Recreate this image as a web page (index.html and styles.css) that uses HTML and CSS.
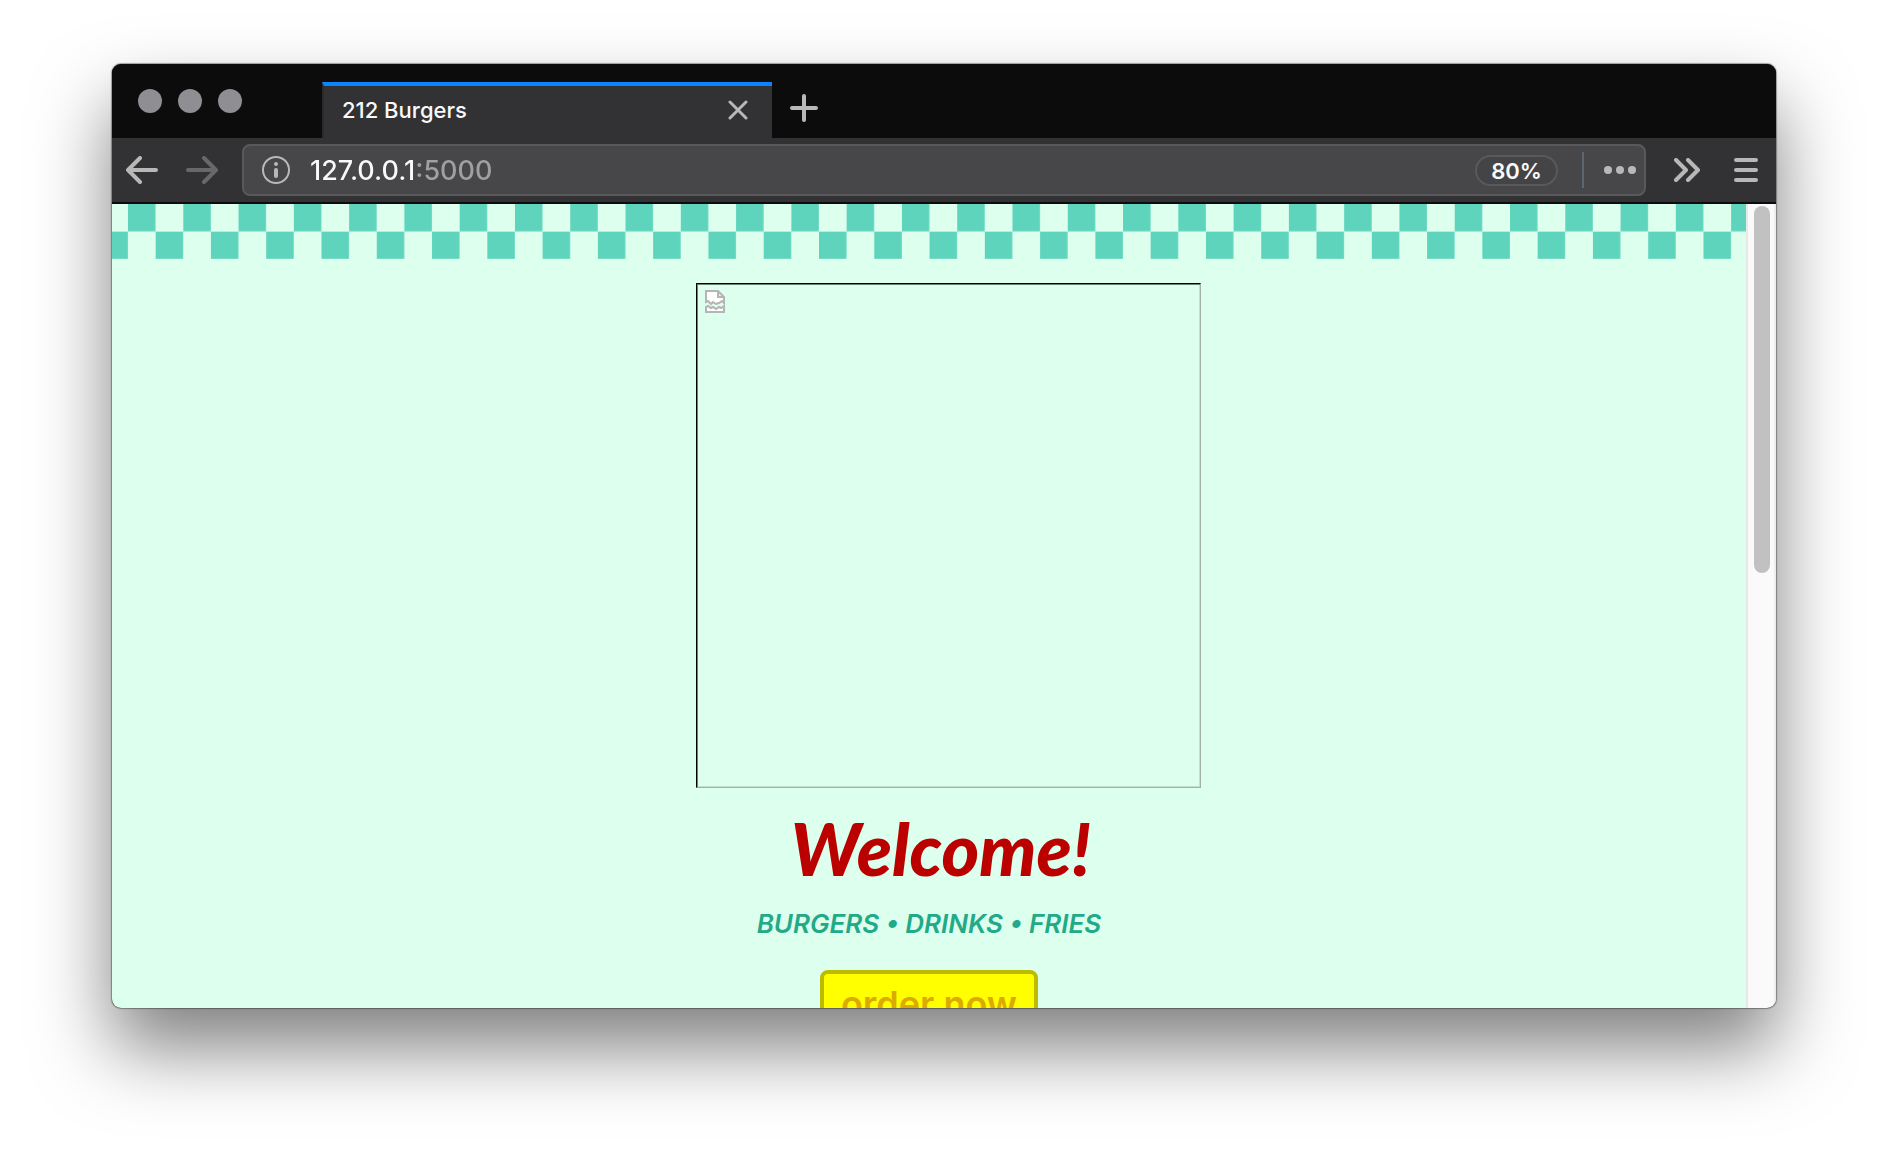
FILE: index.html
```html
<!DOCTYPE html>
<html lang="en">
<head>
<meta charset="utf-8">
<meta name="viewport" content="width=device-width, initial-scale=1">
<title>212 Burgers</title>
<link rel="stylesheet" href="styles.css">
</head>
<body>
<div class="window">
  <header class="titlebar">
    <div class="lights">
      <button class="light" aria-label="Close window"></button>
      <button class="light" aria-label="Minimize window"></button>
      <button class="light" aria-label="Zoom window"></button>
    </div>
    <div class="tab">
      <span class="tab-title">212 Burgers</span>
      <button class="icon-button" aria-label="Close tab">
        <svg width="20" height="20" viewBox="0 0 20 20"><path d="M2 2l16 16M18 2L2 18" stroke-width="3"/></svg>
      </button>
    </div>
    <button class="icon-button new-tab" aria-label="New tab">
      <svg width="28" height="28" viewBox="0 0 28 28"><path d="M14 2v24M2 14h24" stroke-width="4"/></svg>
    </button>
  </header>

  <nav class="toolbar">
    <button class="icon-button" aria-label="Back">
      <svg width="32" height="28" viewBox="0 0 32 28"><path d="M30 14H2M14 2L2 14l12 12" stroke-width="4"/></svg>
    </button>
    <button class="icon-button forward" aria-label="Forward" disabled>
      <svg width="32" height="28" viewBox="0 0 32 28"><path d="M2 14h28M18 2l12 12-12 12" stroke-width="4"/></svg>
    </button>
    <form class="urlbar">
      <button type="button" class="icon-button" aria-label="Site information">
        <svg width="28" height="28" viewBox="0 0 28 28"><circle cx="14" cy="14" r="13" stroke-width="2"/><path d="M14 14v6" stroke-width="4"/><circle class="dot" cx="14" cy="8" r="2"/></svg>
      </button>
      <input class="url" type="text" value="127.0.0.1:5000" aria-label="Address">
      <button type="button" class="zoom">80%</button>
      <span class="divider"></span>
      <button type="button" class="icon-button" aria-label="Page actions">
        <svg width="32" height="8" viewBox="0 0 32 8"><circle class="dot" cx="4" cy="4" r="4"/><circle class="dot" cx="16" cy="4" r="4"/><circle class="dot" cx="28" cy="4" r="4"/></svg>
      </button>
    </form>
    <button class="icon-button" aria-label="More tools">
      <svg width="26" height="24" viewBox="0 0 26 24"><path d="M2 2l10 10L2 22M14 2l10 10-10 10" stroke-width="4"/></svg>
    </button>
    <button class="icon-button menu" aria-label="Open menu">
      <svg width="24" height="24" viewBox="0 0 24 24"><path d="M2 2h20M2 12h20M2 22h20" stroke-width="4"/></svg>
    </button>
  </nav>

  <div class="viewport">
    <main class="page">
      <svg class="checks" aria-hidden="true">
        <defs>
          <pattern id="check" x="16" width="55.28" height="55.28" patternUnits="userSpaceOnUse">
            <path d="M0 0h27.5v27.5H0zM27.64 27.64h27.5v27.5h-27.5z"/>
          </pattern>
        </defs>
        <rect width="100%" height="55" fill="url(#check)"/>
      </svg>
      <div class="picture" role="img" aria-label="Missing picture">
        <svg width="20" height="23" viewBox="0 0 20 23"><path class="sheet" d="M1 1h12l6 6v6l-2-2-3 2-3 1-3-2-2 2-3-3-2 1zM13 1v6h6M1 22v-5l2-1 3 2 2-1 3 2 3-2 2 1 3-2v6z"/></svg>
      </div>
      <h1 class="welcome">Welcome!</h1>
      <p class="tagline">BURGERS • DRINKS • FRIES</p>
      <button class="order">order now</button>
    </main>
    <div class="scrollbar"><div class="thumb"></div></div>
  </div>
</div>
</body>
</html>
```
FILE: styles.css
```css
* { box-sizing: border-box; }

body {
  margin: 0;
  padding: 64px 112px 160px;
  background: #fff;
  font-family: Inter, "Liberation Sans", sans-serif;
}

button, input {
  margin: 0;
  padding: 0;
  border: 0;
  background: none;
  font: inherit;
}

.window {
  display: flex;
  flex-direction: column;
  height: calc(100vh - 224px);
  overflow: hidden;
  border-radius: 9px;
  background: #0c0c0d;
  box-shadow: 0 0 1px 1px rgba(0, 0, 0, .35), 0 40px 76px rgba(0, 0, 0, .5);
}

/* Title bar */
.titlebar {
  display: flex;
  align-items: flex-end;
  flex: none;
  height: 74px;
  background: #0c0c0d;
}

.lights {
  display: flex;
  gap: 16px;
  width: 210px;
  padding: 0 0 25px 26px;
}

.light {
  width: 24px;
  height: 24px;
  border-radius: 50%;
  background: #8f8e93;
}

.tab {
  display: flex;
  align-items: center;
  justify-content: space-between;
  width: 450px;
  height: 56px;
  padding: 0 24px 4px 18px;
  border-left: 2px solid #2a2a2c;
  border-top: 4px solid #0a84ff;
  background: #323234;
}

.tab-title {
  color: #f9f9fa;
  font-size: 22px;
  font-weight: 500;
  line-height: 28px;
}

.icon-button {
  display: flex;
  flex: none;
}

.icon-button svg {
  fill: none;
  stroke: #b8b8b9;
  stroke-linecap: round;
  stroke-linejoin: round;
}

.icon-button .dot {
  fill: #b8b8b9;
  stroke: none;
}

.new-tab { padding: 0 0 16px 18px; }

/* Toolbar */
.toolbar {
  display: flex;
  align-items: center;
  flex: none;
  height: 66px;
  padding: 0 18px 0 14px;
  border-bottom: 2px solid #0c0c0d;
  background: #323234;
}

.forward { margin: 0 24px 0 28px; }
.forward svg { stroke: #68686a; }

.urlbar {
  display: flex;
  align-items: center;
  flex: 1;
  height: 52px;
  margin-right: 28px;
  padding: 0 8px 0 18px;
  border: 2px solid #59595b;
  border-radius: 8px;
  background: #474749;
}

/* The host is bright and the port is dimmed. */
.url {
  flex: 1;
  min-width: 0;
  height: 40px;
  margin-left: 20px;
  background: linear-gradient(to right, #f9f9fa 105px, #a0a0a2 105px);
  background-clip: text;
  color: transparent;
  font-size: 27px;
  font-weight: 500;
}

.zoom {
  width: 83px;
  height: 31px;
  border: 2px solid #59595b;
  border-radius: 16px;
  background: #444446;
  color: #f9f9fa;
  font-size: 22px;
  font-weight: 600;
  line-height: 28px;
}

.divider {
  width: 2px;
  height: 36px;
  margin: 0 20px 0 24px;
  background: #5d6673;
}

.menu { margin-left: 34px; }

/* Web page */
.viewport {
  display: flex;
  flex: 1;
  min-height: 0;
}

.page {
  display: flex;
  flex-direction: column;
  align-items: center;
  flex: 1;
  overflow: hidden;
  background: #ddffee;
}

.page > * { flex: none; }

.checks {
  width: 100%;
  height: 55px;
  fill: #5fd4bc;
}

.picture {
  width: 505px;
  height: 505px;
  margin: 24px 0 0 39px;
  padding: 6px 8px;
  border: 1px solid;
  border-color: #000 #a5b0aa #a5b0aa #000;
  box-shadow: inset 1px 1px #6d7f76, inset -1px -1px #c5ddd2;
}

.sheet {
  fill: #fff;
  stroke: #b5b5b5;
  stroke-width: 2;
}

.welcome {
  margin: 16px 0 0;
  padding-left: 24px;
  color: #bb0000;
  font-family: Lato, "Liberation Sans", sans-serif;
  font-size: 72px;
  font-style: italic;
  font-weight: 900;
  line-height: 88px;
}

.tagline {
  margin: 14px 0 0;
  color: #22aa88;
  font-size: 26px;
  font-style: italic;
  font-weight: 600;
  line-height: 36px;
}

.order {
  width: 218px;
  margin-top: 28px;
  padding: 8px 0;
  border: 4px solid #bbbb00;
  border-radius: 8px;
  background: #ffff00;
  color: #ddaa00;
  font-size: 36px;
  font-weight: 600;
  line-height: 44px;
}

.scrollbar {
  flex: none;
  width: 30px;
  padding: 2px 4px 0 6px;
  border-left: 2px solid #e8e8e8;
  border-right: 2px solid #ededed;
  background: #fafafa;
}

.thumb {
  width: 16px;
  height: 367px;
  border-radius: 8px;
  background: #c1c1c1;
}
```
